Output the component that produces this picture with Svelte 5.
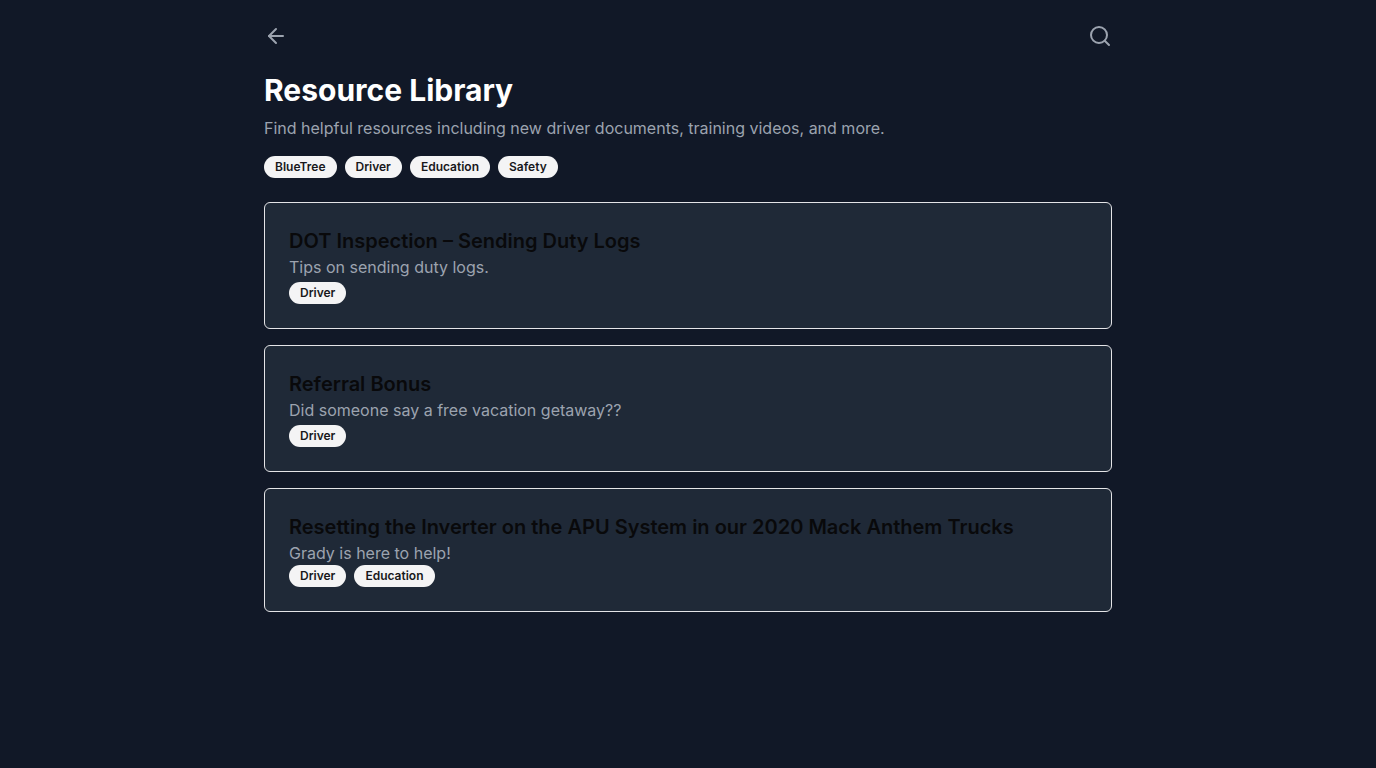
<script>
  const filters = ['BlueTree', 'Driver', 'Education', 'Safety'];
  const resources = [
    { title: 'DOT Inspection – Sending Duty Logs', text: 'Tips on sending duty logs.', tags: ['Driver'] },
    { title: 'Referral Bonus', text: 'Did someone say a free vacation getaway??', tags: ['Driver'] },
    {
      title: 'Resetting the Inverter on the APU System in our 2020 Mack Anthem Trucks',
      text: 'Grady is here to help!',
      tags: ['Driver', 'Education']
    }
  ];
</script>

<main>
  <nav>
    <button class="icon" aria-label="Back">
      <svg viewBox="0 0 24 24"><path d="m12 19-7-7 7-7" /><path d="M19 12H5" /></svg>
    </button>
    <button class="icon" aria-label="Search">
      <svg viewBox="0 0 24 24"><circle cx="11" cy="11" r="8" /><path d="m21 21-4.3-4.3" /></svg>
    </button>
  </nav>

  <header>
    <h1>Resource Library</h1>
    <p>Find helpful resources including new driver documents, training videos, and more.</p>
    <div class="filters">
      {#each filters as filter}
        <button class="badge">{filter}</button>
      {/each}
    </div>
  </header>

  <div class="list">
    {#each resources as item}
      <article>
        <h2>{item.title}</h2>
        <p>{item.text}</p>
        <div class="tags" class:multiple={item.tags.length > 1}>
          {#each item.tags as tag}
            <span class="badge">{tag}</span>
          {/each}
        </div>
      </article>
    {/each}
  </div>
</main>

<style>
  :global(body) {
    background: #111827;
    font-family: Inter, sans-serif;
    font-size: 16px;
    line-height: 24px;
  }
  main {
    box-sizing: border-box;
    max-width: 896px;
    margin: 0 auto;
    padding: 24px;
  }
  nav {
    display: flex;
    justify-content: space-between;
    margin-bottom: 24px;
  }
  .icon {
    padding: 0;
    border: 0;
    background: none;
    color: #9ca3af;
    cursor: pointer;
  }
  svg {
    display: block;
    width: 24px;
    height: 24px;
    fill: none;
    stroke: currentColor;
    stroke-width: 2;
    stroke-linecap: round;
    stroke-linejoin: round;
  }
  h1,
  h2,
  p {
    margin: 0;
  }
  h1 {
    color: #fff;
    font-size: 30px;
    font-weight: 700;
    line-height: 36px;
    margin-bottom: 8px;
  }
  p {
    color: #9ca3af;
  }
  .filters,
  .tags {
    display: flex;
    flex-wrap: wrap;
    gap: 8px;
  }
  .filters {
    margin: 16px 0 24px;
  }
  .badge {
    padding: 2px 10px;
    border: 1px solid transparent;
    border-radius: 999px;
    background: #f4f4f5;
    color: #18181b;
    font-family: inherit;
    font-size: 12px;
    font-weight: 600;
    line-height: 16px;
  }
  .list {
    display: grid;
    gap: 16px;
  }
  article {
    padding: 24px;
    border: 1px solid #e4e4e7;
    border-radius: 6px;
    background: #1f2937;
  }
  h2 {
    color: #09090b;
    font-size: 20px;
    font-weight: 600;
    line-height: 28px;
  }
  .tags {
    padding-top: 3px;
  }
  .tags.multiple {
    padding-top: 0;
  }
</style>
